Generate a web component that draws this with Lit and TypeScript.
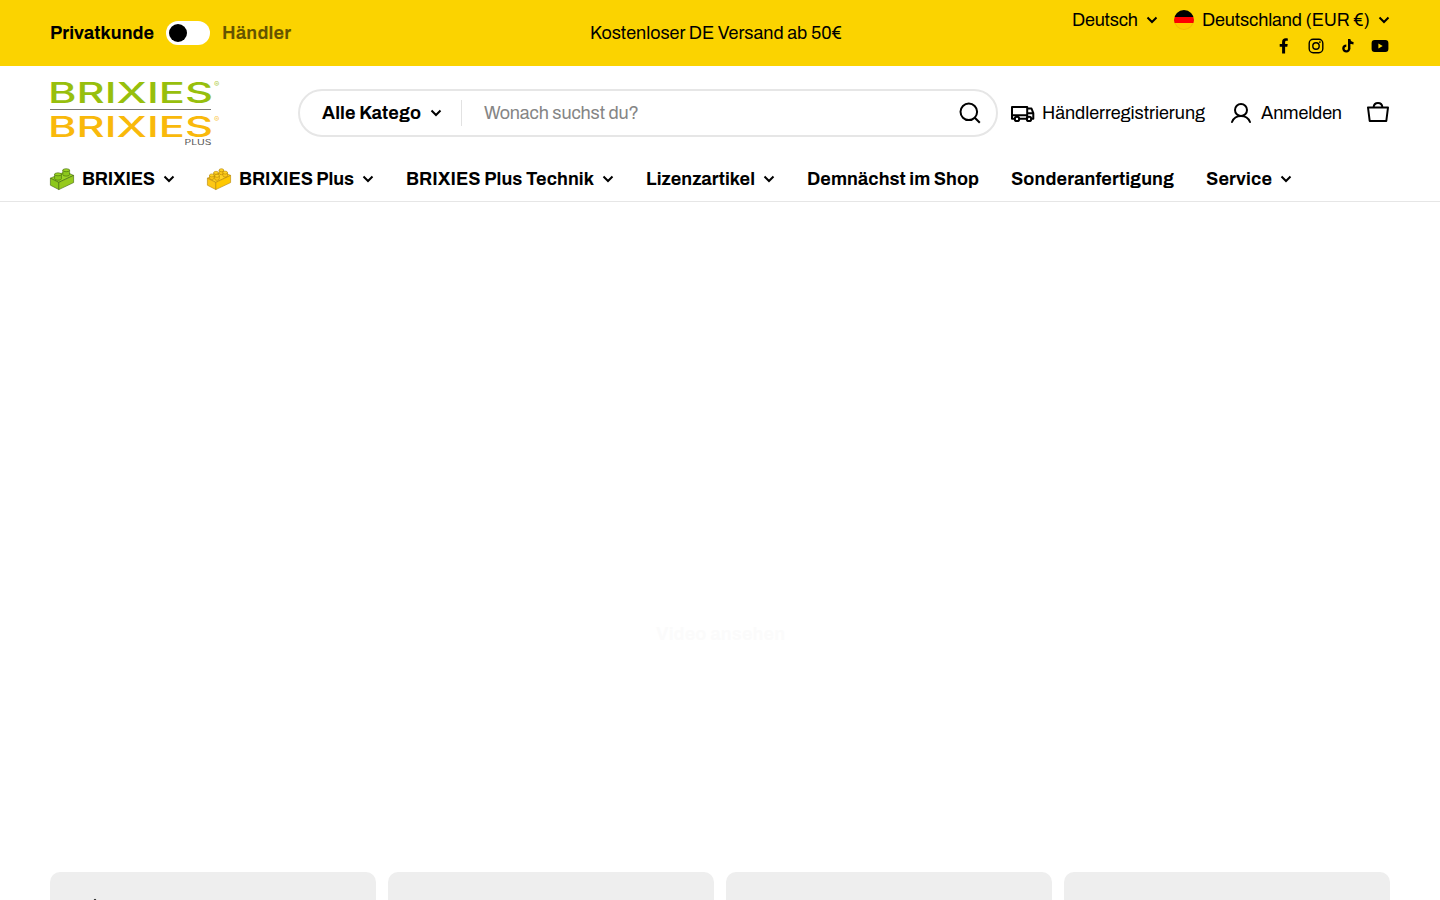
import { LitElement, html, svg, css } from "lit";
import { customElement } from "lit/decorators.js";

const chevron = html`<svg class="chev" width="12" height="8" viewBox="0 0 12 8" fill="none" stroke="currentColor" stroke-width="2"><path d="M1.5 1.5 6 6l4.5-4.5"/></svg>`;

const brick = (top: string, left: string, right: string, line: string, studs: number[][]) => html`
  <svg width="24" height="22" viewBox="0 0 24 22" stroke=${line} stroke-width=".6" stroke-linejoin="round">
    <path fill=${top} d="M.4 10.200 15.400 3.600 23.600 7.400 8.800 14.400z"/>
    <path fill=${left} d="M.4 10.200 8.800 14.400V21.600L.4 17.200z"/>
    <path fill=${right} d="M8.800 14.400 23.600 7.400v7.200L8.800 21.600z"/>
    ${studs.map(([x, y, w, h]) => svg`<path fill=${left} d="M${x - w} ${y}v${h}a${w} 1.500 0 0 0 ${w * 2} 0v${-h}z"/><ellipse fill=${top} cx=${x} cy=${y} rx=${w} ry="1.5"/>`)}
  </svg>`;

const greenBrick = brick("#9cd425", "#8cc81c", "#96ca1d", "#3f650b", [[16.2, 2.2, 3.4, 4.4], [8, 6.3, 3.4, 4.4]]);
const yellowBrick = brick("#ffd323", "#fcc716", "#ffc800", "#b58408", [[14.4, 2.2, 2.3, 3], [9, 4.8, 2.3, 3], [18.2, 4.6, 2.3, 3], [4.800, 7.400, 2.300, 2.600], [10, 7.800, 2.300, 3]]);

const nav = [
  { label: "BRIXIES", width: 73, menu: true, icon: greenBrick },
  { label: "BRIXIES Plus", width: 115, menu: true, icon: yellowBrick },
  { label: "BRIXIES Plus Technik", width: 188, menu: true },
  { label: "Lizenzartikel", width: 109, menu: true },
  { label: "Demnächst im Shop", width: 172 },
  { label: "Sonderanfertigung", width: 163 },
  { label: "Service", width: 66, menu: true },
];

@customElement("app-root")
export class AppRoot extends LitElement {
  static styles = css`
    :host { display: block; height: 900px; overflow: hidden; background: #fff; color: #000;
      font: 18px/26px "Archivo", "Liberation Sans", Arial, sans-serif; }
    * { box-sizing: border-box; }
    svg { display: block; flex: none; overflow: visible; }
    .bar { height: 66px; padding: 0 50px; background: #fbd300; display: grid; grid-template-columns: 1fr 252px 1fr; align-items: center; }
    .customer { display: flex; align-items: center; font-weight: 700; }
    .switch { width: 44px; height: 24px; border-radius: 12px; background: #fff; margin: 0 12px; padding: 3px; }
    .knob { width: 18px; height: 18px; border-radius: 50%; background: #000; }
    .dealer { opacity: .6; }
    .notice { margin-left: -4px; }
    .right { display: flex; flex-direction: column; align-items: flex-end; }
    .locale, .social { display: flex; align-items: center; }
    .locale { height: 26px; white-space: nowrap; }
    .locale .chev { margin-left: 8px; }
    .flag { width: 20px; height: 20px; border-radius: 50%; margin: 0 8px 0 16px; background: linear-gradient(#000 0 33%, #f00 33% 67%, #fc0 67%); box-shadow: inset 0 0 0 1px rgba(0,0,0,.06); }
    .social { height: 26px; gap: 12px; }
    .head { height: 94px; padding: 0 50px; display: flex; align-items: center; }
    .logo { margin-right: 78px; }
    .search { flex: none; width: 700px; height: 48px; border: 2px solid #e6e6e6; border-radius: 24px; display: flex; align-items: center; padding: 0 15px 0 22px; }
    .category { font-weight: 700; display: flex; align-items: center; gap: 9px; height: 26px; width: 140px; border-right: 1px solid #e2e2e2; white-space: nowrap; }
    .query { flex: 1; margin-left: 22px; color: #858585; }
    .action { display: flex; align-items: center; white-space: nowrap; }
    .dealer-link { margin-left: 12px; gap: 7px; }
    .login { margin-left: 24px; gap: 8px; }
    .cart { margin-left: 24px; }
    .nav { height: 42px; padding: 6px 50px 0; display: flex; gap: 32px; border-bottom: 1px solid #e6e6e6; }
    .entry { display: flex; align-items: center; height: 26px; font-weight: 700; }
    .entry .chev { margin-left: 8px; }
    .brick { width: 24px; margin-right: 8px; }
    .hero { height: 670px; display: flex; justify-content: center; padding-top: 419px; }
    .video { color: #fbfbfb; font-weight: 700; }
    .cards { display: grid; grid-template-columns: repeat(4, 1fr); gap: 12px; padding: 0 50px; }
    .card { height: 180px; background: #eee; border-radius: 10px; padding: 26px 42px; }
  `;

  text(label: string, width: number) {
    return html`<svg width=${width} height="26"><text x="0" y="19" textLength=${width} fill="currentColor">${label}</text></svg>`;
  }

  render() {
    return html`
      <div class="bar">
        <div class="customer">${this.text("Privatkunde", 104)}<div class="switch"><div class="knob"></div></div><div class="dealer">${this.text("Händler", 69)}</div></div>
        <div class="notice">${this.text("Kostenloser DE Versand ab 50€", 252)}</div>
        <div class="right">
          <div class="locale">${this.text("Deutsch", 66)}${chevron}<div class="flag"></div>${this.text("Deutschland (EUR €)", 168)}${chevron}</div>
          <div class="social">
            <svg width="20" height="20" viewBox="0 0 20 20"><path d="M8.100 17.500v-6.700H5.700V8h2.400V5.900c0-2.400 1.400-3.700 3.600-3.700 1 0 2.100.2 2.100.2v2.300h-1.200c-1.200 0-1.500.7-1.500 1.400V8h2.600l-.4 2.800h-2.200v6.700z"/></svg>
            <svg width="20" height="20" viewBox="0 0 20 20" fill="none" stroke="#000" stroke-width="1.4"><rect x="3.200" y="3.200" width="13.600" height="13.600" rx="4"/><circle cx="10" cy="10" r="3.200"/><circle cx="13.900" cy="6.100" r=".9" fill="#000" stroke="none"/></svg>
            <svg width="20" height="20" viewBox="0 0 20 20" fill="none" stroke="#000" stroke-width="2.400"><path d="M11.200 3v9.400a2.900 2.900 0 1 1-2.900-2.800M11.200 3.200c.3 2.500 1.900 3.900 4.300 4.100"/></svg>
            <svg width="20" height="20" viewBox="0 0 20 20"><rect x="1.600" y="4" width="16.800" height="12" rx="3"/><path fill="#fbd300" d="m8.400 7.500 4.300 2.500-4.300 2.500z"/></svg>
          </div>
        </div>
      </div>
      <div class="head">
        <svg class="logo" width="170" height="66" viewBox="0 0 170 66" font-family="Inter, sans-serif">
          <g font-size="28.500" font-weight="500">
            <text x="-2" y="22.500" textLength="165" lengthAdjust="spacingAndGlyphs" fill="#97bf0d">BRIXIES</text>
            <text x="-2" y="57.200" textLength="165" lengthAdjust="spacingAndGlyphs" fill="#f9b90b">BRIXIES</text>
          </g>
          <path d="M0 29.500h161" stroke="#777" />
          <text x="164" y="7" font-size="8" fill="#b4ce4d">®</text><text x="164" y="41.500" font-size="8" fill="#fbca50">®</text>
          <text x="134.500" y="65" font-size="7" textLength="27" lengthAdjust="spacingAndGlyphs" fill="#555">PLUS</text>
        </svg>
        <div class="search">
          <div class="category">${this.text("Alle Katego", 99)}${chevron}</div>
          <div class="query">${this.text("Wonach suchst du?", 155)}</div>
          <svg width="22" height="22" viewBox="0 0 22 22" fill="none" stroke="#000" stroke-width="2"><circle cx="9.800" cy="9.800" r="8.300"/><path d="m15.800 15.800 5 5"/></svg>
        </div>
        <div class="action dealer-link">
          <svg width="25" height="18" viewBox="0 0 25 18" fill="none" stroke="#000" stroke-width="2" stroke-linejoin="round"><path d="M4.500 14.700H2V3h15.200v11.700H9.500M2 11.200h15.200M17.200 4.500h4.300l1.800 4.700v5.500h-1.500M17.200 9.200h6M14 14.700h3"/><circle cx="7" cy="14.900" r="2.200"/><circle cx="19" cy="14.900" r="2.200"/></svg>
          ${this.text("Händlerregistrierung", 163)}
        </div>
        <div class="action login">
          <svg width="24" height="24" viewBox="0 0 24 24" fill="none" stroke="#000" stroke-width="2" stroke-linecap="round"><circle cx="12" cy="9" r="6"/><path d="M3 21c1.500-3.800 5-6 9-6s7.500 2.200 9 6"/></svg>
          ${this.text("Anmelden", 81)}
        </div>
        <svg class="cart" width="24" height="24" viewBox="0 0 24 24" fill="none" stroke="#000" stroke-width="2" stroke-linejoin="round"><path d="M2 6.500h20l-1.700 13.500H3.700zM7.500 6.500c.3-3 2-4.500 4.500-4.500s4.200 1.500 4.500 4.500"/></svg>
      </div>
      <div class="nav">
        ${nav.map((n) => html`<div class="entry">${n.icon ? html`<div class="brick">${n.icon}</div>` : ""}${this.text(n.label, n.width)}${n.menu ? chevron : ""}</div>`)}
      </div>
      <div class="hero"><div class="video">${this.text("Video ansehen", 129)}</div></div>
      <div class="cards">
        <div class="card"><svg width="6" height="30" viewBox="0 0 6 30"><path d="M.5 3 3 .800l2.500 2.200v27h-5z"/></svg></div>
        <div class="card"></div><div class="card"></div><div class="card"></div>
      </div>`;
  }
}
